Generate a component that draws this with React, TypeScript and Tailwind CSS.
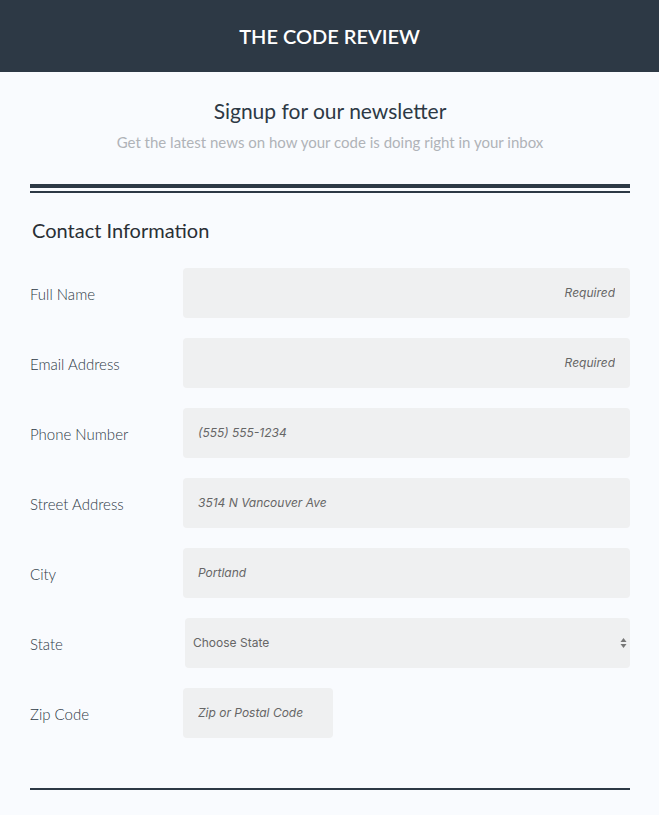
import React from 'react';

const fields = [
  { label: 'Full Name', placeholder: 'Required', right: true },
  { label: 'Email Address', placeholder: 'Required', right: true },
  { label: 'Phone Number', placeholder: '(555) 555-1234' },
  { label: 'Street Address', placeholder: '3514 N Vancouver Ave' },
  { label: 'City', placeholder: 'Portland' },
];

const inputCls =
  "h-[50px] rounded-[4px] bg-[#eff0f1] px-[15px] text-[12px] italic text-[#555] placeholder:text-[#666] outline-none font-['Inter',sans-serif]";

const labelCls = 'mt-[3px] text-[15px] font-light text-[#2d3945]';

export default function App() {
  return (
    <div className="min-h-[815px] bg-[#f9fbfe] font-['Lato',sans-serif]">
      <header className="flex h-[72px] items-center justify-center bg-[#2d3945]">
        <h1 className="text-[20px] font-semibold text-white">THE CODE REVIEW</h1>
      </header>

      <div className="pl-[30px] pr-[29px]">
        <div className="pt-[26px] text-center">
          <h2 className="text-[21px] leading-[26px] text-[#2d3945]">Signup for our newsletter</h2>
          <p className="mt-[7px] text-[15px] text-[#b0b3b8]">
            Get the latest news on how your code is doing right in your inbox
          </p>
        </div>

        <div className="mt-[30px] h-[4px] bg-[#2d3945]" />
        <div className="mt-[3px] h-[2px] bg-[#2d3945]" />

        <h3 className="mt-[24px] pl-[2px] text-[20px] leading-[26px] text-[#2a2f35]">Contact Information</h3>

        <form className="mt-[25px] flex flex-col gap-[20px]">
          {fields.map((f) => (
            <div key={f.label} className="flex items-center">
              <label className={`${labelCls} w-[153px]`}>{f.label}</label>
              <input
                placeholder={f.placeholder}
                className={`${inputCls} flex-1 ${f.right ? 'text-right' : ''}`}
              />
            </div>
          ))}
          <div className="flex items-center">
            <label className={`${labelCls} w-[155px]`}>State</label>
            <div className="relative flex h-[50px] flex-1 items-center rounded-[4px] bg-[#eff0f1] px-[8px]">
              <span className="font-['Inter',sans-serif] text-[12px] text-[#666]">Choose State</span>
              <svg className="absolute right-[3px] top-[19px]" width="7" height="12" viewBox="0 0 7 12">
                <path d="M3.5 1 L6.5 5 L0.5 5 Z" fill="#777" />
                <path d="M3.5 11 L6.5 7 L0.5 7 Z" fill="#777" />
              </svg>
            </div>
          </div>
          <div className="flex items-center">
            <label className={`${labelCls} w-[153px]`}>Zip Code</label>
            <input placeholder="Zip or Postal Code" className={`${inputCls} w-[150px]`} />
          </div>
        </form>

        <div className="mt-[50px] h-[2px] bg-[#2d3945]" />
      </div>
    </div>
  );
}
